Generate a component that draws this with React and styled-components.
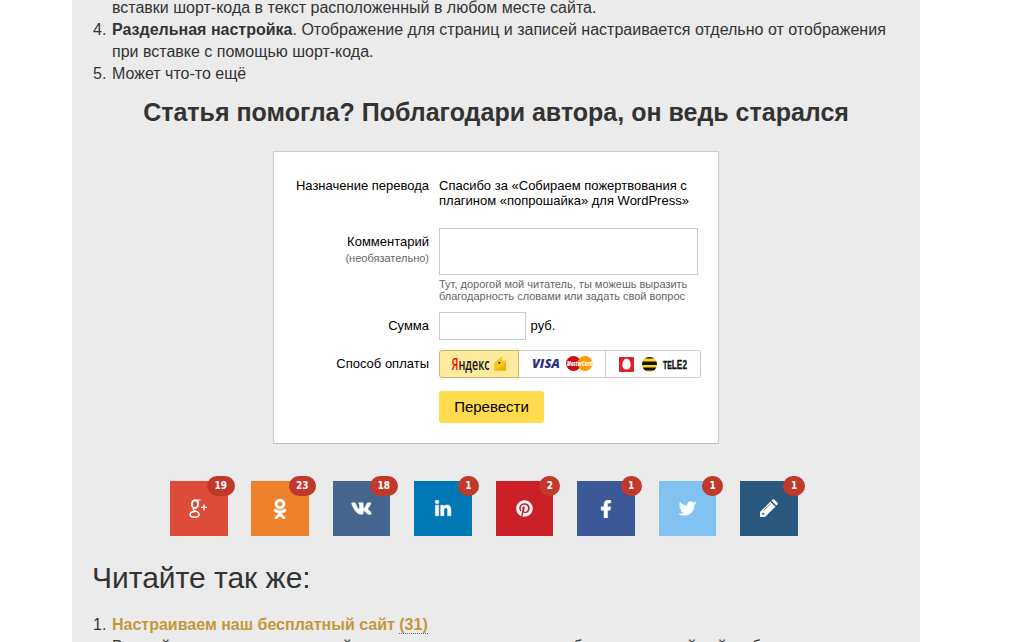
import React from "react";
import styled, { createGlobalStyle } from "styled-components";
import { FaOdnoklassniki, FaVk, FaLinkedinIn, FaPinterest, FaFacebookF, FaTwitter } from "react-icons/fa";

const Global = createGlobalStyle`
  * { box-sizing: border-box; }
  html, body { margin: 0; height: 100%; overflow: hidden; background: #fff; }
  body { font: 16px/22px "Liberation Sans", Arial, sans-serif; color: #333; }
`;
const Page = styled.main`
  width: 848px;
  height: 642px;
  overflow: hidden;
  margin-left: 72px;
  background: #ebebeb;
  padding: 0 20px;
`;
const List = styled.ol`
  list-style: none;
  margin: 0;
  padding: 0;
  margin-top: ${(p) => p.$top}px;
`;
const Item = styled.li`
  display: flex;
  white-space: nowrap;
`;
const Num = styled.span`
  width: 14.4px;
  margin-right: 5.6px;
  display: flex;
  justify-content: flex-end;
`;
const Thanks = styled.h2`
  margin: 10px 0 0;
  font-size: 25px;
  line-height: 34px;
  text-align: center;
  white-space: nowrap;
`;
const Card = styled.form`
  width: 446px;
  height: 293px;
  margin: 22px 0 0 181px;
  background: #fff;
  border: 1px solid #ccc;
  border-bottom-color: #bbb;
  padding: 26px 0 0 10px;
  color: #000;
  font-size: 13px;
  line-height: 15px;
`;
const Row = styled.div`
  display: flex;
  height: ${(p) => p.$h}px;
`;
const Label = styled.div`
  width: 145px;
  margin-right: 10px;
  padding-top: ${(p) => p.$pad || 0}px;
  text-align: right;
  white-space: nowrap;
`;
const Note = styled.div`
  font-size: 11px;
  line-height: 12px;
  color: #666;
  white-space: nowrap;
  margin-top: ${(p) => p.$top}px;
`;
const Comment = styled.textarea`
  display: block;
  width: 259px;
  height: 47px;
  border: 1px solid #ccc;
  resize: none;
`;
const Amount = styled.div`
  display: flex;
  height: 28px;
  line-height: 27px;
`;
const Sum = styled.input`
  width: 87px;
  height: 28px;
  border: 1px solid #ccc;
  margin-right: 4.6px;
`;
const Methods = styled.div`
  display: flex;
  width: 262px;
  height: 28px;
`;
const Method = styled.div`
  width: ${(p) => p.$w}px;
  border: 1px solid ${(p) => (p.$active ? "#d0b967" : "#ccc")};
  border-left-width: ${(p) => (p.$active ? 1 : 0)}px;
  border-radius: ${(p) => p.$radius || 0};
  background: ${(p) => (p.$active ? "#ffeba0" : "#fff")};
  svg { display: block; }
`;
const Submit = styled.button`
  width: 105px;
  height: 32px;
  border: 0;
  border-radius: 3px;
  background: #ffdb4d;
  font: 15px "Liberation Sans", Arial, sans-serif;
  color: #000;
  padding: 0 0 2px;
`;
const Shares = styled.div`
  display: flex;
  margin: 37px 0 0 78px;
  gap: 23.9px;
`;
const Share = styled.div`
  position: relative;
  width: 57.55px;
  height: 55px;
  background: ${(p) => p.$bg};
  color: #fff;
  display: flex;
  align-items: center;
  justify-content: center;
`;
const Badge = styled.span`
  position: absolute;
  top: -5px;
  right: -7.1px;
  height: 20px;
  padding: 0 7.5px;
  border-radius: 10px;
  background: #c0392b;
  font: bold 10px/19px "DejaVu Sans Condensed", "DejaVu Sans", sans-serif;
  font-stretch: condensed;
`;
const Heading = styled.h3`
  margin: 22px 0 0;
  font-size: 30px;
  line-height: 40px;
  font-weight: 400;
`;
const Link = styled.a`
  color: #c6973b;
  font-weight: 700;
`;
const Count = styled.span`
  border-bottom: 1px dotted #666;
`;

const GooglePlus = () => (
  <svg width="20" height="22" viewBox="0 0 20 22" fill="none" stroke="#fff">
    <ellipse cx="6" cy="6.2" rx="3.1" ry="3.9" strokeWidth="2" />
    <path d="M6 2H11.6M8.2 2.3l1.5 1.3" strokeWidth="1.2" />
    <path d="M5.2 10.2c-1.6 1.2-.6 2 .9 2.7 1.9.8 4 1.4 4 3.3 0 2-2.1 3-4.6 3-2.6 0-4.4-.9-4.4-2.7 0-2 2.2-3 4.9-3.1" strokeWidth="1.5" />
    <path d="M15 6.4v6M12 9.4h6" strokeWidth="1.3" />
  </svg>
);
const bold = { stroke: "currentColor", strokeWidth: 14 };

const Pencil = () => (
  <svg width="19" height="19" viewBox="0 0 19 19">
    <path d="M1 18v-5L11.6 2.4l5 5L6 18z" fill="#fff" />
    <path d="M12.4 1.6l1-1q.9-.6 1.8 0l3.2 3.2q.7.9 0 1.8l-1 1z" fill="#fff" />
    <path d="M11.4 2.2l5.3 5.3" stroke="#2b587f" strokeWidth=".8" />
    <path d="M4.5 11.6L11.5 4.8" stroke="#2b587f" strokeWidth=".6" />
    <circle cx="4.2" cy="14.8" r="1.1" fill="#2b587f" />
  </svg>
);

const shares = [
  ["#dd4b39", "19", <GooglePlus />],
  ["#ee822c", "23", <FaOdnoklassniki size={20} {...bold} />],
  ["#45668e", "18", <FaVk size={21} {...bold} />],
  ["#0077b5", "1", <FaLinkedinIn size={18} {...bold} />],
  ["#cb2027", "2", <FaPinterest size={17} />],
  ["#3b5998", "1", <FaFacebookF size={18} {...bold} />],
  ["#82c2f3", "1", <FaTwitter size={17} {...bold} />],
  ["#2b587f", "1", <Pencil />],
];

const Yandex = () => (
  <svg width="78" height="26" fontFamily="Open Sans, sans-serif" fontWeight="600">
    <text x="11.5" y="19" fontSize="16.5" textLength="38" lengthAdjust="spacingAndGlyphs" fill="#111"><tspan fill="red">Я</tspan>ндекс</text>
    <path d="M54 12.3L62 5v4.5h4v10H54z" fill="#fac51c" />
    <path d="M54 19.5l9-4 3-5v9z" fill="#f0b400" />
    <circle cx="59.3" cy="11.7" r="1" fill="#332200" />
  </svg>
);
const BankCards = () => (
  <svg width="86" height="26" fontFamily="Open Sans, sans-serif" fontWeight="800" fontStyle="italic">
    <text x="13" y="17" fontSize="12.5" textLength="28" lengthAdjust="spacingAndGlyphs" fill="#29367f">VISA</text>
    <circle cx="54.5" cy="12.5" r="7.5" fill="#cc0815" />
    <circle cx="66" cy="12.5" r="7.5" fill="#ff9b00" />
    <text x="48" y="15" fontSize="6" textLength="25" lengthAdjust="spacingAndGlyphs" fill="#fff">MasterCard</text>
  </svg>
);
const Mobile = () => (
  <svg width="94" height="26">
    <rect x="13" y="6" width="15" height="15" rx="1" fill="#dc202c" />
    <path d="M20.5 7.5c2.5 0 4.2 3.9 4.2 6.5s-1.7 4.5-4.2 4.5-4.2-1.8-4.2-4.5 1.7-6.5 4.2-6.5z" fill="#fff" />
    <clipPath id="bee"><circle cx="43.5" cy="13.5" r="7.5" /></clipPath>
    <g clipPath="url(#bee)">
      <path d="M35 5h17v17H35z" fill="#ffd21c" />
      <path d="M35 5h17v2.5H35zM35 10.5h17v3.5H35zM35 16.5h17v3H35z" fill="#111" />
    </g>
    <text x="57" y="18" fontFamily="Liberation Sans, sans-serif" fontWeight="700" fontSize="12" textLength="24" lengthAdjust="spacingAndGlyphs" fill="#111" stroke="#111" strokeWidth=".3"><tspan fontSize="10">TE</tspan>LE2</text>
  </svg>
);

export default function App() {
  return (
    <Page>
      <Global />
      <List $top={-3}>
        <Item><Num /><div>вставки шорт-кода в текст расположенный в любом месте сайта.</div></Item>
        <Item><Num>4.</Num><div><b>Раздельная настройка</b>. Отображение для страниц и записей настраивается отдельно от отображения<br />при вставке с помощью шорт-кода.</div></Item>
        <Item><Num>5.</Num><div>Может что-то ещё</div></Item>
      </List>
      <Thanks>Статья помогла? Поблагодари автора, он ведь старался</Thanks>
      <Card>
        <Row $h={50}>
          <Label>Назначение перевода</Label>
          <div>Спасибо за «Собираем пожертвования с<br />плагином «попрошайка» для WordPress»</div>
        </Row>
        <Row $h={84}>
          <Label $pad={6}>Комментарий<Note $top={3}>(необязательно)</Note></Label>
          <div>
            <Comment />
            <Note $top={3}>Тут, дорогой мой читатель, ты можешь выразить<br />благодарность словами или задать свой вопрос</Note>
          </div>
        </Row>
        <Row $h={38}>
          <Label $pad={6}>Сумма</Label>
          <Amount><Sum />руб.</Amount>
        </Row>
        <Row $h={41}>
          <Label $pad={6}>Способ оплаты</Label>
          <Methods>
            <Method $w={80} $active $radius="3px 0 0 3px"><Yandex /></Method>
            <Method $w={87}><BankCards /></Method>
            <Method $w={95} $radius="0 3px 3px 0"><Mobile /></Method>
          </Methods>
        </Row>
        <Row $h={32}>
          <Label />
          <Submit type="button">Перевести</Submit>
        </Row>
      </Card>
      <Shares>
        {shares.map(([bg, count, icon]) => (
          <Share key={bg} $bg={bg}>{icon}<Badge>{count}</Badge></Share>
        ))}
      </Shares>
      <Heading>Читайте так же:</Heading>
      <List $top={16}>
        <Item><Num>1.</Num><div><Link>Настраиваем наш бесплатный сайт <Count>(31)</Count></Link><br />В своей статье расскажу о моей установке и личном сервере бесплатно такой сайт и без</div></Item>
      </List>
    </Page>
  );
}
